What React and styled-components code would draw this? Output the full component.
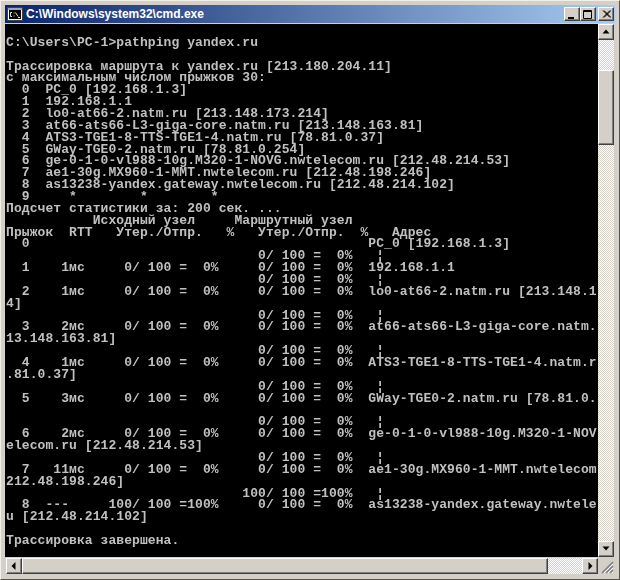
import React from "react";
import styled, { createGlobalStyle } from "styled-components";

const Global = createGlobalStyle`
  html, body { margin: 0; padding: 0; background: #d4d0c8; }
`;

const Window = styled.div`
  width: 620px;
  height: 580px;
  box-sizing: border-box;
  background: #d4d0c8;
  padding: 4px 5px 5px 4px;
  border-top: 1px solid #f2efe8;
  border-left: 1px solid #f2efe8;
  border-right: 1px solid #55534e;
  border-bottom: 1px solid #55534e;
  display: flex;
  flex-direction: column;
  overflow: hidden;
`;

const TitleBar = styled.div`
  height: 18px;
  flex: none;
  margin: 0 -1px 1px 0;
  padding: 0 1px 0 2px;
  display: flex;
  align-items: center;
  gap: 3px;
  background: linear-gradient(90deg, #0a246a 0%, #a6caf0 100%);
`;

const TitleText = styled.span`
  flex: 1;
  color: #fff;
  font: bold 12px "Liberation Sans", Arial, sans-serif;
  line-height: 18px;
`;

const ButtonGroup = styled.div`
  display: flex;
  align-items: center;
`;

const RaisedButton = styled.div`
  box-sizing: border-box;
  width: ${(p) => p.$w || 16}px;
  height: ${(p) => p.$h || 14}px;
  margin-left: ${(p) => p.$gap || 0}px;
  flex: none;
  background: #d4d0c8;
  border-top: 1px solid #fff;
  border-left: 1px solid #fff;
  border-right: 1px solid #404040;
  border-bottom: 1px solid #404040;
  box-shadow: inset -1px -1px 0 #808080;
  display: flex;
  align-items: center;
  justify-content: center;
`;

const Middle = styled.div`
  flex: 1;
  min-height: 0;
  display: flex;
`;

const Console = styled.pre`
  flex: 1;
  min-width: 0;
  margin: 0;
  padding: 1px 0 0 1px;
  background: #000;
  color: #c0c0c0;
  font-family: "Liberation Mono", "DejaVu Sans Mono", monospace;
  font-size: 13px;
  font-weight: bold;
  letter-spacing: 0.075px;
  line-height: 11.857px;
  overflow: hidden;
  filter: blur(0.35px);
`;

const dither = `
  background-color: #f4f3ef;
  background-image: conic-gradient(#d4d0c8 25%, #fff 0 50%, #d4d0c8 0 75%, #fff 0);
  background-size: 2px 2px;
`;

const VerticalBar = styled.div`
  width: 16px;
  flex: none;
  display: flex;
  flex-direction: column;
`;

const Track = styled.div`
  ${dither}
  flex: ${(p) => (p.$h ? `0 0 ${p.$h}px` : 1)};
  min-height: 0;
`;

const BottomRow = styled.div`
  height: 16px;
  flex: none;
  display: flex;
  margin-top: 1px;
`;

const HorizontalBar = styled.div`
  flex: 1;
  display: flex;
  min-width: 0;
  padding-left: 1px;
`;

const HTrack = styled.div`
  ${dither}
  width: ${(p) => p.$w}px;
  flex: none;
`;

const Corner = styled.div`
  width: 16px;
  flex: none;
  display: flex;
  align-items: flex-end;
  justify-content: flex-end;
`;

const CmdIcon = () => (
  <svg width="16" height="14" viewBox="0 0 16 14">
    <rect x="0.5" y="0.5" width="15" height="13" fill="#fff" stroke="#404040" />
    <rect x="1" y="1" width="14" height="2" fill="#a0a0c0" />
    <rect x="2" y="3" width="12" height="9" fill="#000" />
    <path d="M5 5.5H3.5V9.5H5M7 5.5v1M7 8.5v1M8.5 5.5l2.5 4M11 10.5h2" stroke="#e0e0e0" strokeWidth="1" fill="none" />
  </svg>
);

const Min = () => (
  <svg width="10" height="9" viewBox="0 0 10 9">
    <rect x="1" y="7" width="6" height="2" fill="#000" />
  </svg>
);
const Max = () => (
  <svg width="10" height="9" viewBox="0 0 10 9">
    <path d="M0.5 0.5h8v8h-8z M0 1.5h9" stroke="#000" fill="none" />
  </svg>
);
const Close = () => (
  <svg width="9" height="8" viewBox="0 0 9 8">
    <path d="M1 0.5 L8 7.5 M2 0.5 L9 7.5 M8 0.5 L1 7.5 M9 0.5 L2 7.5" stroke="#000" strokeWidth="1" fill="none" />
  </svg>
);
const Arrow = ({ dir }) => {
  const d = {
    up: "M4 1.5 L0.5 5.5 H7.5 Z",
    down: "M0.5 1.5 H7.5 L4 5.5 Z",
    left: "M5.5 0 V8 L1.5 4 Z",
    right: "M2.5 0 V8 L6.5 4 Z",
  }[dir];
  return (
    <svg width="8" height="8" viewBox="0 0 8 8">
      <path d={d} fill="#000" />
    </svg>
  );
};
const Grip = () => (
  <svg width="13" height="13" viewBox="0 0 13 13">
    <path d="M12 1 L1 12 M12 5 L5 12 M12 9 L9 12" stroke="#808080" strokeWidth="1.6" fill="none" />
    <path d="M12 3 L3 12 M12 7 L7 12 M12 11 L11 12" stroke="#fff" strokeWidth="1" fill="none" />
  </svg>
);

const text = `
C:\\Users\\PC-1>pathping yandex.ru

Трассировка маршрута к yandex.ru [213.180.204.11]
с максимальным числом прыжков 30:
  0  PC_0 [192.168.1.3]
  1  192.168.1.1
  2  lo0-at66-2.natm.ru [213.148.173.214]
  3  at66-ats66-L3-giga-core.natm.ru [213.148.163.81]
  4  ATS3-TGE1-8-TTS-TGE1-4.natm.ru [78.81.0.37]
  5  GWay-TGE0-2.natm.ru [78.81.0.254]
  6  ge-0-1-0-vl988-10g.M320-1-NOVG.nwtelecom.ru [212.48.214.53]
  7  ae1-30g.MX960-1-MMT.nwtelecom.ru [212.48.198.246]
  8  as13238-yandex.gateway.nwtelecom.ru [212.48.214.102]
  9     *        *        *
Подсчет статистики за: 200 сек. ...
           Исходный узел     Маршрутный узел
Прыжок  RTT   Утер./Отпр.   %   Утер./Отпр.  %   Адрес
  0                                           PC_0 [192.168.1.3]
                                0/ 100 =  0%   ¦
  1    1мс     0/ 100 =  0%     0/ 100 =  0%  192.168.1.1
                                0/ 100 =  0%   ¦
  2    1мс     0/ 100 =  0%     0/ 100 =  0%  lo0-at66-2.natm.ru [213.148.1
4]
                                0/ 100 =  0%   ¦
  3    2мс     0/ 100 =  0%     0/ 100 =  0%  at66-ats66-L3-giga-core.natm.
13.148.163.81]
                                0/ 100 =  0%   ¦
  4    1мс     0/ 100 =  0%     0/ 100 =  0%  ATS3-TGE1-8-TTS-TGE1-4.natm.r
.81.0.37]
                                0/ 100 =  0%   ¦
  5    3мс     0/ 100 =  0%     0/ 100 =  0%  GWay-TGE0-2.natm.ru [78.81.0.

                                0/ 100 =  0%   ¦
  6    2мс     0/ 100 =  0%     0/ 100 =  0%  ge-0-1-0-vl988-10g.M320-1-NOV
elecom.ru [212.48.214.53]
                                0/ 100 =  0%   ¦
  7   11мс     0/ 100 =  0%     0/ 100 =  0%  ae1-30g.MX960-1-MMT.nwtelecom
212.48.198.246]
                              100/ 100 =100%   ¦
  8  ---     100/ 100 =100%     0/ 100 =  0%  as13238-yandex.gateway.nwtele
u [212.48.214.102]

Трассировка завершена.`;

export default function App() {
  return (
    <>
      <Global />
      <Window>
        <TitleBar>
          <CmdIcon />
          <TitleText>C:\Windows\system32\cmd.exe</TitleText>
          <ButtonGroup>
            <RaisedButton><Min /></RaisedButton>
            <RaisedButton><Max /></RaisedButton>
            <RaisedButton $gap={2}><Close /></RaisedButton>
          </ButtonGroup>
        </TitleBar>
        <Middle>
          <Console>{text}</Console>
          <VerticalBar>
            <RaisedButton $h={16}><Arrow dir="up" /></RaisedButton>
            <Track $h={30} />
            <RaisedButton $h={75} />
            <Track />
            <RaisedButton $h={16}><Arrow dir="down" /></RaisedButton>
          </VerticalBar>
        </Middle>
        <BottomRow>
          <HorizontalBar>
            <RaisedButton $h={16}><Arrow dir="left" /></RaisedButton>
            <RaisedButton $w={526} $h={16} />
            <HTrack $w={34} />
            <RaisedButton $h={16}><Arrow dir="right" /></RaisedButton>
          </HorizontalBar>
          <Corner><Grip /></Corner>
        </BottomRow>
      </Window>
    </>
  );
}
